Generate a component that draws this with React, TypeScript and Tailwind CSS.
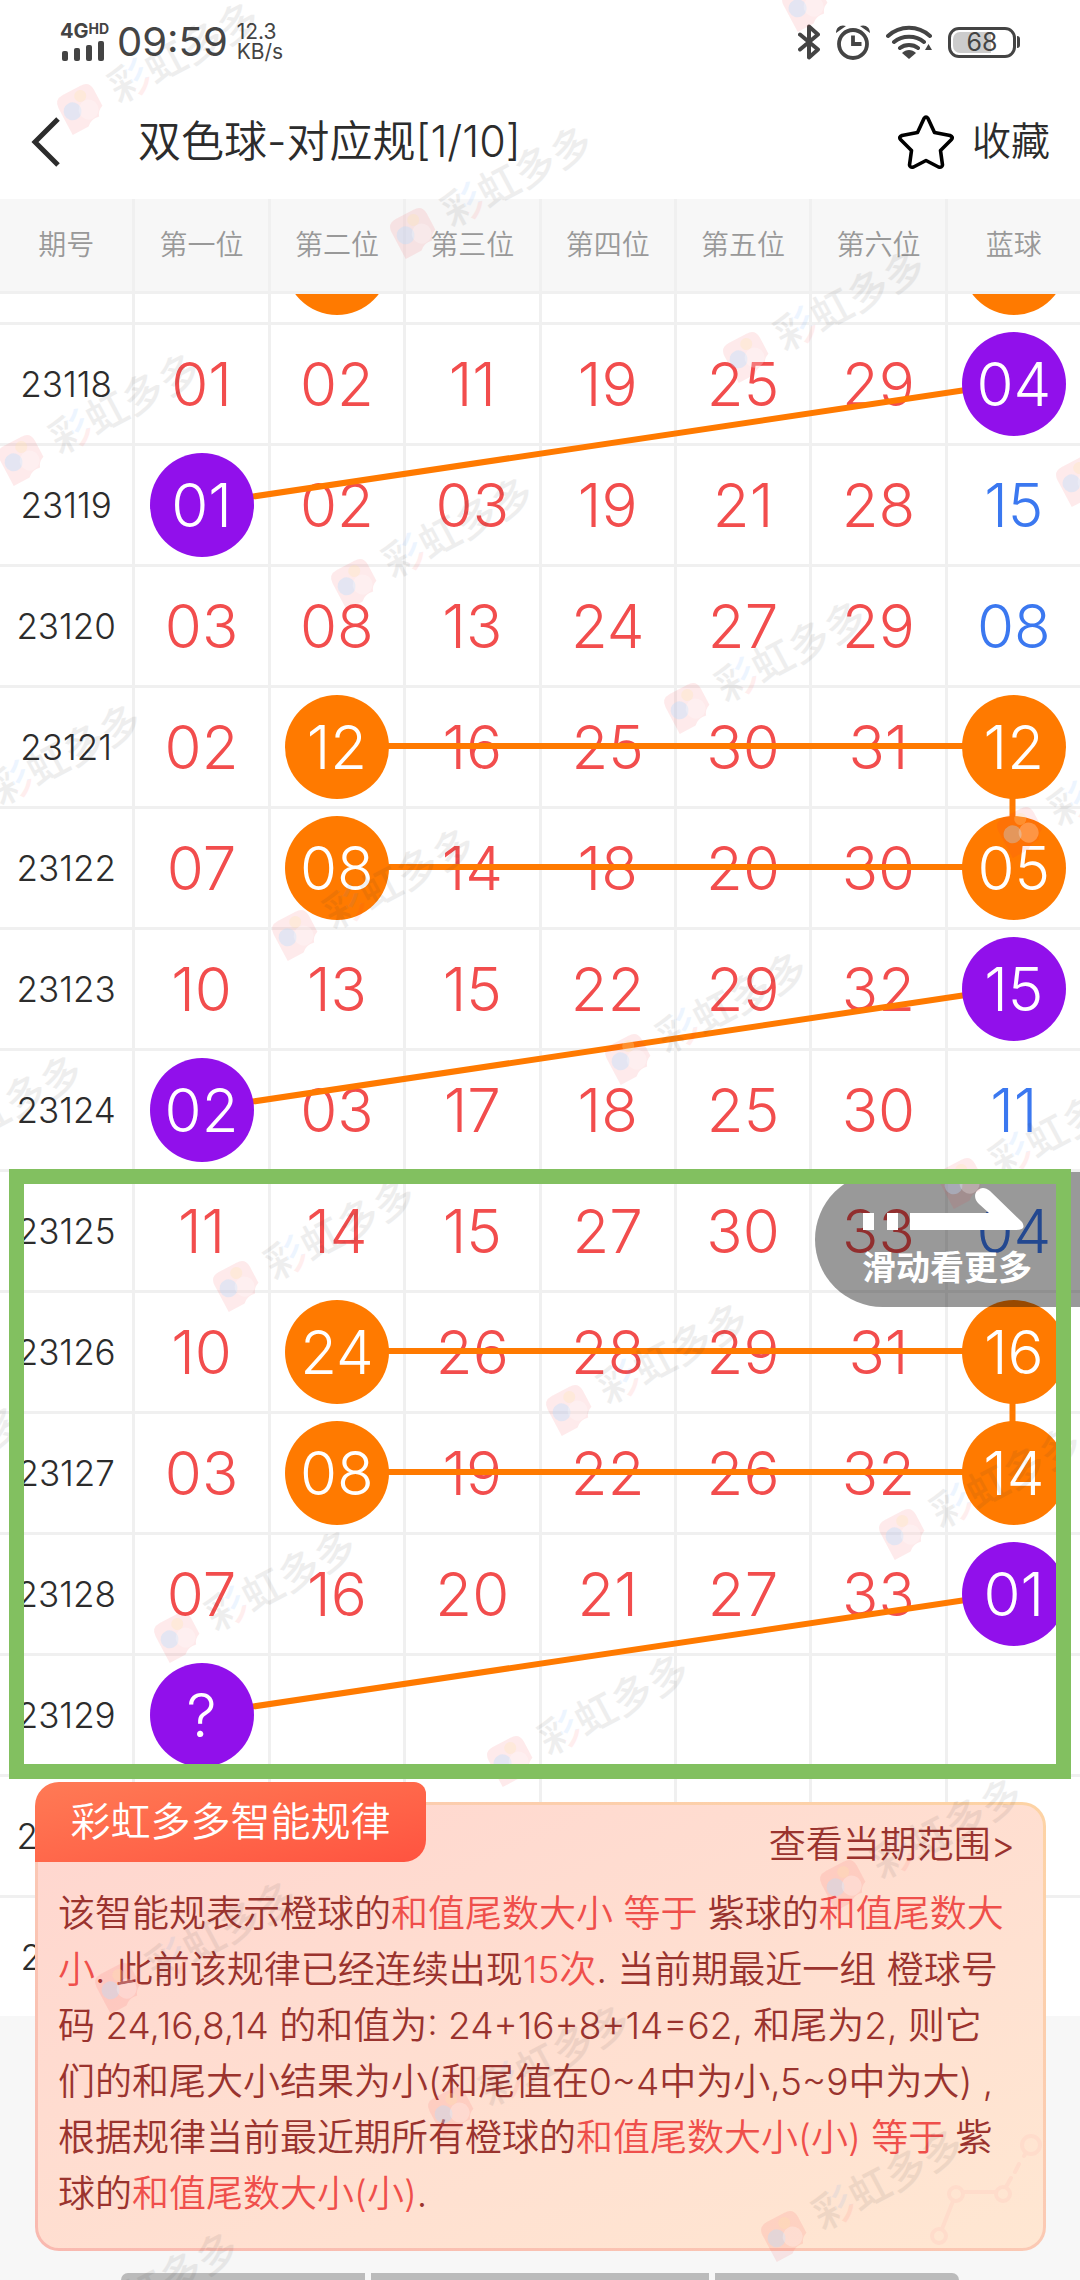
import type { ReactNode } from 'react';

type Tone = 'orange' | 'purple';

interface Draw {
  issue: string;
  numbers: string[];
  balls?: Partial<Record<number, Tone>>;
}

const COLUMNS = ['期号', '第一位', '第二位', '第三位', '第四位', '第五位', '第六位', '蓝球'];

const EMPTY = ['', '', '', '', '', '', ''];

const DRAWS: Draw[] = [
  { issue: '', numbers: EMPTY, balls: { 1: 'orange', 6: 'orange' } },
  { issue: '23118', numbers: ['01', '02', '11', '19', '25', '29', '04'], balls: { 6: 'purple' } },
  { issue: '23119', numbers: ['01', '02', '03', '19', '21', '28', '15'], balls: { 0: 'purple' } },
  { issue: '23120', numbers: ['03', '08', '13', '24', '27', '29', '08'] },
  { issue: '23121', numbers: ['02', '12', '16', '25', '30', '31', '12'], balls: { 1: 'orange', 6: 'orange' } },
  { issue: '23122', numbers: ['07', '08', '14', '18', '20', '30', '05'], balls: { 1: 'orange', 6: 'orange' } },
  { issue: '23123', numbers: ['10', '13', '15', '22', '29', '32', '15'], balls: { 6: 'purple' } },
  { issue: '23124', numbers: ['02', '03', '17', '18', '25', '30', '11'], balls: { 0: 'purple' } },
  { issue: '23125', numbers: ['11', '14', '15', '27', '30', '33', '04'] },
  { issue: '23126', numbers: ['10', '24', '26', '28', '29', '31', '16'], balls: { 1: 'orange', 6: 'orange' } },
  { issue: '23127', numbers: ['03', '08', '19', '22', '26', '32', '14'], balls: { 1: 'orange', 6: 'orange' } },
  { issue: '23128', numbers: ['07', '16', '20', '21', '27', '33', '01'], balls: { 6: 'purple' } },
  { issue: '23129', numbers: ['?', '', '', '', '', '', ''], balls: { 0: 'purple' } },
  { issue: '23130', numbers: EMPTY },
  { issue: '23131', numbers: EMPTY },
];

// [column, row, column, row], column 0 is the issue number
const LINKS = [
  [1, 2, 7, 1],
  [2, 4, 7, 4],
  [7, 4, 7, 5],
  [2, 5, 7, 5],
  [1, 7, 7, 6],
  [2, 9, 7, 9],
  [7, 9, 7, 10],
  [2, 10, 7, 10],
  [1, 12, 7, 11],
];

const BALL_TONES: Record<Tone, string> = {
  orange: 'bg-[#ff7a00]',
  purple: 'bg-[#9110eb]',
};

function StatusBar() {
  return (
    <div className="flex h-[84px] items-center justify-between px-[60px] text-[#444]">
      <div className="flex items-center gap-[9px]">
        <div className="flex w-[48px] flex-col gap-[2px]">
          <div className="flex items-start font-bold">
            <span className="text-[20px] leading-[16px]">4G</span>
            <span className="text-[14px] leading-[12px]">HD</span>
          </div>
          <svg viewBox="0 0 44 20" className="h-5 w-[44px]" fill="currentColor">
            <rect x="2" y="10" width="6" height="10" rx="2" />
            <rect x="14" y="7" width="6" height="13" rx="2" />
            <rect x="26" y="4" width="6" height="16" rx="2" />
            <rect x="38" y="0" width="6" height="20" rx="2" />
          </svg>
        </div>
        <span className="text-[40px] leading-[48px]">09:59</span>
        <div className="flex flex-col text-[21px] leading-[20px]">
          <span>12.3</span>
          <span>KB/s</span>
        </div>
      </div>
      <div className="flex items-center gap-4">
        <svg
          viewBox="0 0 22 36"
          className="h-9 w-[22px]"
          fill="none"
          stroke="currentColor"
          strokeWidth="4"
          strokeLinejoin="round"
          strokeLinecap="round"
        >
          <path d="M2 10.500 20 25.500 11 33.500V2.500l9 8L2 25.500" />
        </svg>
        <svg viewBox="0 0 34 36" className="h-9 w-[34px]" fill="none" stroke="currentColor" strokeWidth="3.8">
          <circle cx="17" cy="20" r="14" />
          <path d="M17 11.500v8.500h8.500" />
          <path d="M0 9C0 3 5 0 10 2zM34 9C34 3 29 0 24 2z" fill="currentColor" stroke="none" />
        </svg>
        <svg
          viewBox="0 0 46 36"
          className="h-9 w-[46px]"
          fill="none"
          stroke="currentColor"
          strokeWidth="4"
          strokeLinecap="round"
        >
          <path d="M2 12C14 1 32 1 44 12M8 18c8-7 22-7 30 0M14 24c5-4 13-4 18 0" />
          <path d="M16 29c4-4 10-4 14 0l-7 6z" fill="currentColor" stroke="none" />
          <path d="m42.500 20 3.500 6h-7z" fill="currentColor" stroke="none" />
        </svg>
        <div className="flex items-center gap-px">
          <div className="flex h-[31px] w-[68px] rounded-[11px] border-3 border-current p-[2px]">
            <div className="flex flex-1 items-center justify-center rounded-[7px] bg-linear-to-r from-[#ccc] from-65% to-white to-65% text-[25px] leading-6">
              68
            </div>
          </div>
          <span className="h-3 w-[3px] rounded-r-full bg-current" />
        </div>
      </div>
    </div>
  );
}

function TitleBar() {
  return (
    <header className="flex h-[115px] items-center px-[30px] text-[#2c2c2c]">
      <button type="button" aria-label="返回">
        <svg viewBox="0 0 30 52" className="h-[52px] w-[30px]" fill="none" stroke="currentColor" strokeWidth="5">
          <path d="M28 3 5 26l23 23" />
        </svg>
      </button>
      <h1 className="ml-[78px] text-[43px] font-[350]">双色球-对应规[1/10]</h1>
      <button type="button" className="ml-auto flex items-center gap-[18px] text-[39px] font-[350]">
        <svg
          viewBox="0 0 56 56"
          className="size-14"
          fill="none"
          stroke="#000"
          strokeWidth="3.6"
          strokeLinejoin="round"
        >
          <path d="M26 4.500q2-3 4 0l6.500 14 15.500 3q3.500 1.500 1.500 4L42.500 36.500 44.500 51q-.5 3-4 2L28 46.500 15.500 53q-3.500 1-4-2l2-14.500L2.500 25.500q-2-2.500 1.500-4l15.500-3z" />
        </svg>
        收藏
      </button>
    </header>
  );
}

function NumberCell({ value, ball, last }: { value: string; ball?: Tone; last: boolean }) {
  if (ball) {
    return (
      <span
        className={`relative z-20 flex size-[104px] items-center justify-center rounded-full text-white ${BALL_TONES[ball]}`}
      >
        {value}
      </span>
    );
  }
  return <span className={last ? 'text-[#3b78f0]' : 'text-[#f24d4d]'}>{value}</span>;
}

function TrendTable() {
  return (
    <section className="relative overflow-hidden">
      <table className="block bg-[#f0f0f0]">
        <thead className="relative z-25 block bg-[#f0f0f0] pb-[3px]">
          <tr className="grid grid-cols-8 gap-x-[3px]">
            {COLUMNS.map((label) => (
              <th
                key={label}
                className="flex h-[92px] items-center justify-center bg-[#f7f7f7] text-[28px] font-[350] text-[#999]"
              >
                {label}
              </th>
            ))}
          </tr>
        </thead>
        <tbody className="-mt-[90px] grid gap-y-[3px]">
          {DRAWS.map((draw, row) => (
            <tr key={row} className="grid grid-cols-8 gap-x-[3px]">
              <td className="flex h-[118px] items-center justify-center bg-white text-[35px] font-[350] text-[#2c2c2c]">
                {draw.issue}
              </td>
              {draw.numbers.map((value, i) => (
                <td key={i} className="flex h-[118px] items-center justify-center bg-white text-[60px] font-[360]">
                  <NumberCell value={value} ball={draw.balls?.[i]} last={i === 6} />
                </td>
              ))}
            </tr>
          ))}
        </tbody>
      </table>

      <svg
        viewBox={`0 0 8 ${DRAWS.length}`}
        preserveAspectRatio="none"
        className="absolute inset-x-0 top-[5px] z-10 h-[1815px] w-full"
        stroke="#ff7a00"
        strokeWidth="6"
      >
        {LINKS.map(([x1, y1, x2, y2]) => (
          <line
            key={`${x1}-${y1}-${y2}`}
            x1={x1 + 0.5}
            y1={y1 + 0.48}
            x2={x2 + 0.5}
            y2={y2 + 0.48}
            vectorEffect="non-scaling-stroke"
          />
        ))}
      </svg>

      <button
        type="button"
        className="absolute right-0 top-[973px] z-25 flex h-[135px] w-[265px] flex-col items-start gap-[2px] rounded-l-full bg-black/40 pl-[47px] pt-2 text-[34px] leading-[40px] font-bold text-white"
      >
        <svg viewBox="0 0 164 66" className="h-[66px] w-[164px]" fill="#fff">
          <path d="M1 33h11v17H1zM25 33h11v17H25zM48 33h79l-10-9c-10-9 1-22 11-13l32 31q5 8-6 8H48z" />
        </svg>
        滑动看更多
      </button>

      <div className="absolute inset-x-[9px] top-[970px] z-40 h-[610px] border-15 border-[#82c060]" />
    </section>
  );
}

function Hot({ children }: { children: ReactNode }) {
  return <span className="text-[#ef4f4b]">{children}</span>;
}

function RuleCard() {
  return (
    <section className="absolute bottom-[29px] left-[35px] right-[34px] z-30">
      <div className="rounded-[24px] bg-linear-to-tr from-[#f9b9b0] via-[#fbc9b4] to-[#fdd3a4] p-[3px]">
        <div className="relative rounded-[21px] bg-linear-to-br from-[#ffd6cf] to-[#ffe7d2] pb-[26px] pl-[20px] pr-[28px] pt-[12px] text-[37px] leading-[56px] font-[350] text-[#9a332e]">
          <div className="mb-[13px] flex justify-end">
            <a href="#range">查看当期范围&gt;</a>
          </div>
          <p>
            该智能规表示橙球的<Hot>和值尾数大小 等于</Hot> 紫球的<Hot>和值尾数大小</Hot>. 此前该规律已经连续出现
            <Hot>15次</Hot>. 当前期最近一组 橙球号码 24,16,8,14 的和值为: 24+16+8+14=62, 和尾为2,
            则它们的和尾大小结果为小(和尾值在0~4中为小,5~9中为大) , 根据规律当前最近期所有橙球的
            <Hot>和值尾数大小(小) 等于</Hot> 紫球的<Hot>和值尾数大小(小)</Hot>.
          </p>
          <svg
            viewBox="0 0 116 116"
            className="absolute bottom-0 right-0 size-[116px]"
            fill="none"
            stroke="#ffdccb"
            strokeWidth="4"
            strokeLinecap="round"
          >
            <circle cx="12" cy="104" r="7" />
            <circle cx="29" cy="62" r="7" />
            <circle cx="76" cy="62" r="7" />
            <circle cx="104" cy="13" r="9" />
            <path d="M15 97 26 69M36 60h33M79 55l5-9M88 40l4-8M97 24l2-3" />
          </svg>
        </div>
      </div>
      <h2 className="absolute -top-[20px] left-0 flex h-[80px] w-[391px] items-center justify-center rounded-tl-[24px] rounded-tr-[12px] rounded-br-[22px] bg-linear-to-br from-[#ff7a55] to-[#ff5340] text-[40px] font-[350] text-white">
        彩虹多多智能规律
      </h2>
    </section>
  );
}

// Repeated brand mark laid over the whole page on a slanted lattice
function Watermark() {
  const marks: { x: number; y: number }[] = [];
  for (let row = -1; row < 7; row++) {
    for (let col = 0; col < 4; col++) {
      const x = 81 - 59 * row + 333 * col;
      const y = 108 + 351 * row + 124 * col;
      if (y > -20 && x < 1100) marks.push({ x, y });
    }
  }
  return (
    <svg className="pointer-events-none absolute inset-0 z-35 size-full" aria-hidden="true">
      <defs>
        <pattern id="ink" patternUnits="userSpaceOnUse" x="35" y="-40" width="400" height="100">
          <rect width="400" height="100" fill="#333" />
          <rect x="22" y="0" width="20" height="44" fill="#2b86ff" />
          <rect x="22" y="44" width="20" height="56" fill="#ff3030" />
        </pattern>
      </defs>
      {marks.map(({ x, y }) => (
        <g key={`${x}-${y}`} transform={`translate(${x} ${y}) rotate(-28)`}>
          <path
            d="M-10-20H10Q20-20 20-10V8Q14 10 12 16Q4 14-2 20H-20V-10Q-20-20-10-20z"
            fill="#f5333f"
            opacity="0.1"
          />
          <circle cx="-9" cy="-1" r="9" fill="#b5dcff" opacity="0.35" />
          <circle cx="6" cy="5" r="10" fill="#fff" opacity="0.25" />
          <circle cx="5" cy="-11" r="6" fill="#ffe9a8" opacity="0.25" />
          <text x="35" y="14" fontSize="41" fontWeight="500" fill="url(#ink)" opacity="0.08">
            彩虹多多
          </text>
        </g>
      ))}
    </svg>
  );
}

export default function App() {
  return (
    <main className="relative min-h-screen overflow-hidden bg-[#f7f7f7] font-['Inter','Noto_Sans_CJK_SC',sans-serif]">
      <div className="bg-white">
        <StatusBar />
        <TitleBar />
      </div>
      <TrendTable />
      <RuleCard />
      <div className="absolute inset-x-[121px] bottom-0 flex h-[7px] gap-[6px]">
        <span className="flex-1 rounded-tl-full bg-[#bbb]" />
        <span className="w-[338px] bg-[#bbb]" />
        <span className="flex-1 rounded-tr-full bg-[#bbb]" />
      </div>
      <Watermark />
    </main>
  );
}
